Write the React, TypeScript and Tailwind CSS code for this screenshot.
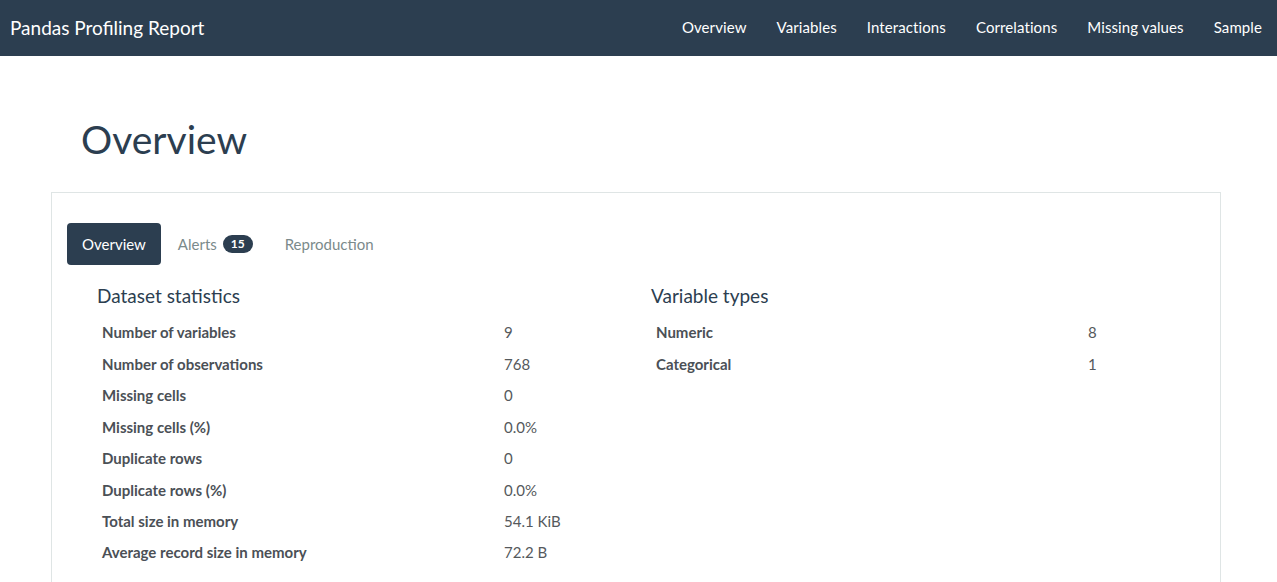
import React from "react";

const navLinks = ["Overview", "Variables", "Interactions", "Correlations", "Missing values", "Sample"];

const stats: [string, string][] = [
  ["Number of variables", "9"],
  ["Number of observations", "768"],
  ["Missing cells", "0"],
  ["Missing cells (%)", "0.0%"],
  ["Duplicate rows", "0"],
  ["Duplicate rows (%)", "0.0%"],
  ["Total size in memory", "54.1 KiB"],
  ["Average record size in memory", "72.2 B"],
];

const types: [string, string][] = [
  ["Numeric", "8"],
  ["Categorical", "1"],
];

function StatTable({ rows, labelWidth }: { rows: [string, string][]; labelWidth: string }) {
  return (
    <div className="flex flex-col">
      {rows.map(([k, v]) => (
        <div key={k} className="flex items-center h-[31.43px] text-[15px]">
          <div className={`${labelWidth} pl-[5px] font-bold text-[#4b5056]`}>{k}</div>
          <div className="text-[#55595c]">{v}</div>
        </div>
      ))}
    </div>
  );
}

export default function App() {
  return (
    <div className="min-h-[582px] bg-white text-[#2c3e50]" style={{ fontFamily: "Lato, 'Noto Sans', sans-serif" }}>
      <nav className="h-[56px] bg-[#2c3e50] flex items-center justify-between">
        <div className="pl-[10px] text-[19px] text-white leading-none -mt-[2px]">Pandas Profiling Report</div>
        <ul className="flex -mt-[2px]">
          {navLinks.map((l) => (
            <li key={l} className="px-[15px] text-[15px] tracking-[0.1px] text-white">
              {l}
            </li>
          ))}
        </ul>
      </nav>

      <div className="ml-[51px] w-[1170px]">
        <h1 className="mt-[61px] pl-[30px] text-[39px] leading-[44px] font-normal text-[#2c3e50]">Overview</h1>

        <div className="mt-[31px] border border-[#dfe5e5] px-[15px] pt-[30px] pb-[40px]">
          <div className="flex gap-[2px] text-[15px]">
            <div className="h-[42px] px-[15px] flex items-center rounded-[4px] bg-[#2c3e50] text-white">Overview</div>
            <div className="h-[42px] px-[15px] flex items-center text-[#7b8a8b]">
              Alerts
              <span className="ml-[6px] inline-flex items-center justify-center h-[18px] px-[8px] rounded-full bg-[#2c3e50] text-white text-[12px] font-bold leading-none">
                15
              </span>
            </div>
            <div className="h-[42px] px-[15px] flex items-center text-[#7b8a8b]">Reproduction</div>
          </div>

          <div className="grid grid-cols-[554px_1fr] pl-[30px]">
            <div>
              <h4 className="mt-[20px] mb-[10px] text-[19px] leading-[22px] text-[#2c3e50]">Dataset statistics</h4>
              <StatTable rows={stats} labelWidth="w-[407px]" />
            </div>
            <div>
              <h4 className="mt-[20px] mb-[10px] text-[19px] leading-[22px] text-[#2c3e50]">Variable types</h4>
              <StatTable rows={types} labelWidth="w-[437px]" />
            </div>
          </div>
        </div>
      </div>
    </div>
  );
}
